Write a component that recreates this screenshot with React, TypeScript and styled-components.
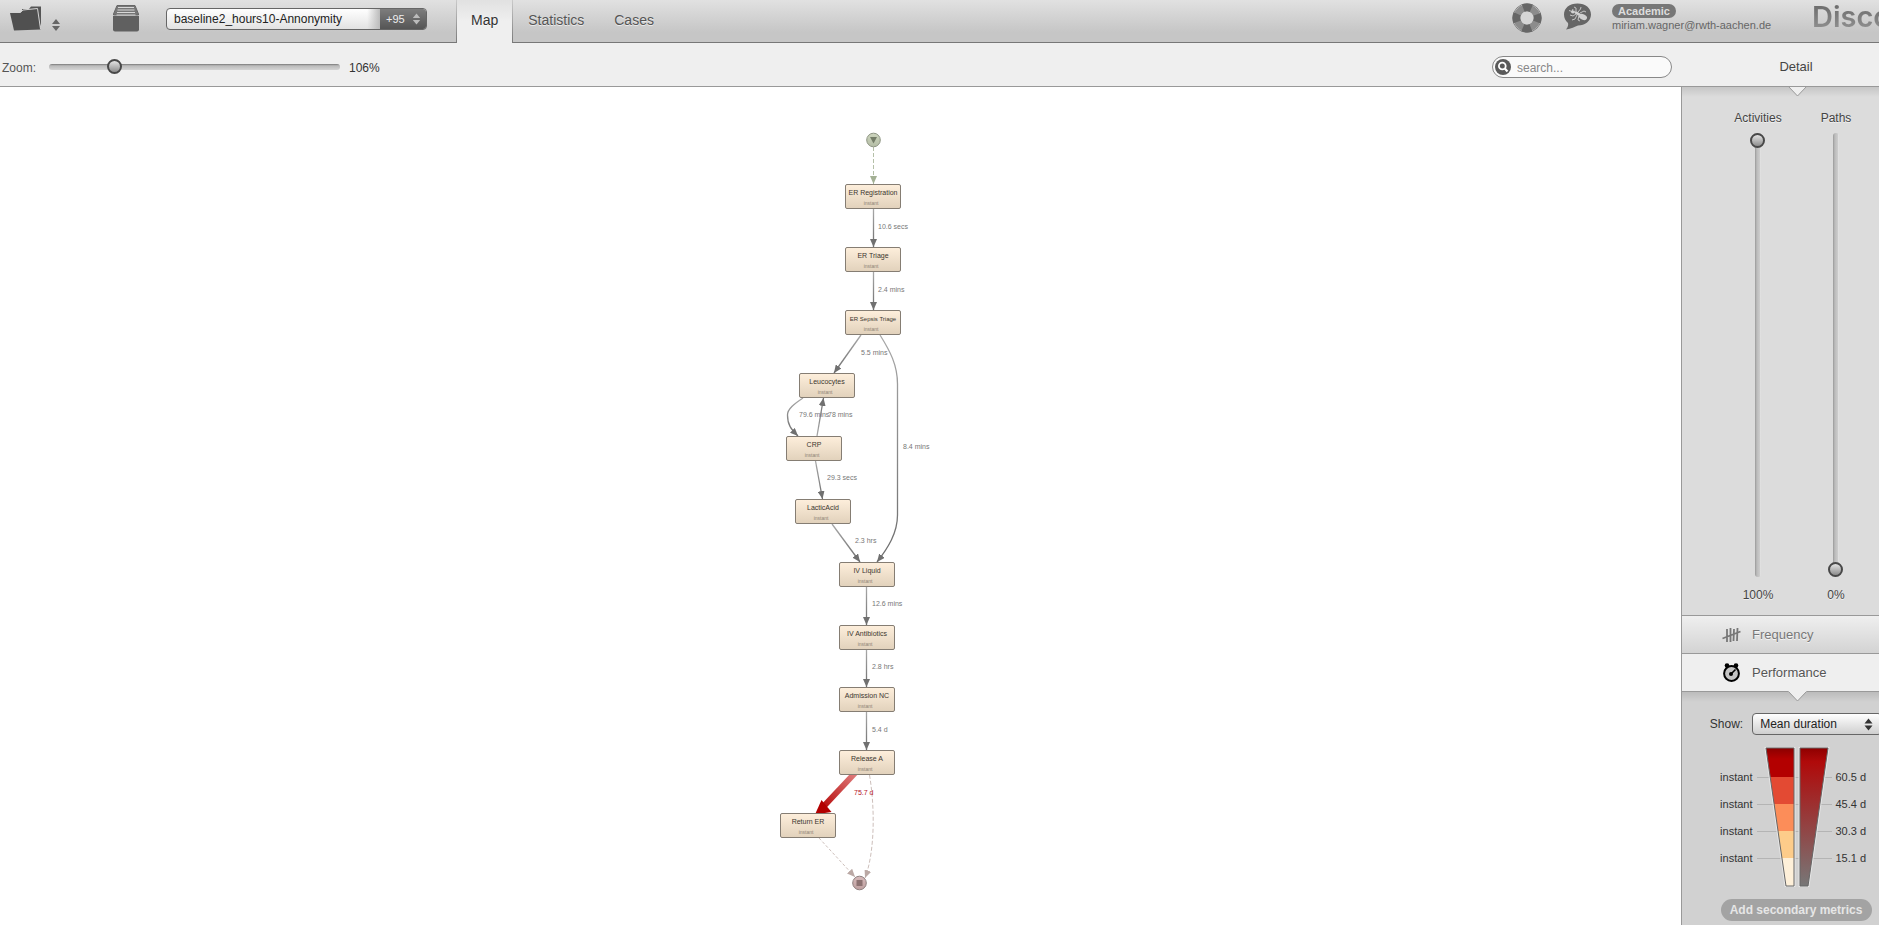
import React, { useState } from "react";
import styled, { createGlobalStyle, css } from "styled-components";

const GlobalStyle = createGlobalStyle`
  *, *::before, *::after { box-sizing: border-box; }
  body {
    margin: 0;
    background: #fff;
    color: #333;
    font: 12px/16px "Liberation Sans", Arial, sans-serif;
  }
  button, input, select { font: inherit; color: inherit; margin: 0; }
`;

const SIDEBAR = "198px";
const PANEL = "230px";

const Page = styled.div`
  display: flex;
  flex-direction: column;
  min-height: 100vh;
`;

/* ---------- header ---------- */

const Header = styled.header`
  display: flex;
  align-items: stretch;
  height: 43px;
  overflow: hidden;
  background: linear-gradient(#e1e1e1, #c6c6c6 75%);
  box-shadow: inset 0 -1px #777;
`;

const IconButton = styled.button`
  display: flex;
  align-items: flex-start;
  padding: 5px 0 0;
  border: 0;
  background: none;
`;

const FileTools = styled.div`
  display: flex;
  align-items: flex-start;
  gap: 52px;
  padding-left: 10px;
`;

const LogPicker = styled.div`
  display: flex;
  width: 261px;
  height: 22px;
  margin: 8px 29px 0 27px;
  border: 1px solid #666;
  border-radius: 4px;
  overflow: hidden;
  background: linear-gradient(#fff, #e2e2e2);
`;

const LogSelect = styled.select`
  flex: 1;
  min-width: 0;
  padding: 0 7px;
  border: 0;
  appearance: none;
  background: linear-gradient(90deg, transparent 94%, #bbb);
  color: #222;
`;

const MoreLogs = styled.button`
  display: flex;
  align-items: center;
  gap: 7px;
  width: 46px;
  padding: 0 0 0 6px;
  border: 0;
  background: linear-gradient(#7d7d7d, #555);
  color: #eee;
  font-size: 11px;
`;

const Tabs = styled.nav`
  display: flex;
`;

const Tab = styled.a<{ $active?: boolean }>`
  padding: 12px 15px 0;
  font-size: 14px;
  color: #555;
  text-decoration: none;
  text-shadow: 0 1px rgba(255, 255, 255, 0.6);
  ${(p) =>
    p.$active &&
    css`
      color: #333;
      padding: 12px 14px 0;
      border: solid;
      border-width: 0 1px;
      border-image: linear-gradient(#ccc, #777) 1;
      background: linear-gradient(#e1e1e1, #efefef 50%);
    `}
`;

const HeaderRight = styled.div`
  display: flex;
  align-items: flex-start;
  margin-left: auto;
`;

const HelpTools = styled.div`
  display: flex;
  gap: 20px;
  margin: -3px 20px 0 0;
`;

const Account = styled.div`
  display: flex;
  flex-direction: column;
  align-items: flex-start;
  width: 200px;
  padding-top: 4px;
  font-size: 11px;
  line-height: 14px;
  color: #666;
`;

const Badge = styled.strong`
  padding: 0 6px;
  border-radius: 7px;
  background: #777;
  color: #ddd;
`;

const Logo = styled.div`
  width: 67px;
  overflow: hidden;
  font: 600 29px/33px Inter, sans-serif;
  background: linear-gradient(#6c6c6c 15%, #969696);
  background-clip: text;
  color: transparent;
  white-space: nowrap;
`;

/* ---------- tool bar ---------- */

const Toolbar = styled.div`
  display: flex;
  align-items: center;
  height: 44px;
  padding: 7px 0 0 2px;
  background: #efefef;
  border-bottom: 1px solid #999;
`;

const ZoomLabel = styled.label`
  width: 47px;
  color: #555;
`;

const thumb = css`
  appearance: none;
  width: 15px;
  height: 15px;
  border: 2px solid #484848;
  border-radius: 50%;
  background: linear-gradient(#e4e4e4, #8c8c8c);
`;

const Slider = styled.input`
  appearance: none;
  width: 291px;
  height: 15px;
  margin: 0 9px 2px 0;
  background: none;
  &::-webkit-slider-runnable-track {
    height: 6px;
    border-radius: 3px;
    background: linear-gradient(#777, #bbb 30%, #d4d4d4);
  }
  &::-webkit-slider-thumb {
    ${thumb}
    margin-top: -5px;
  }
`;

const Search = styled.label`
  display: flex;
  align-items: center;
  gap: 6px;
  width: 180px;
  height: 22px;
  margin: 0 9px 2px auto;
  padding-left: 2px;
  border: 1px solid #888;
  border-radius: 11px;
  background: #fafafa;
  input {
    flex: 1;
    min-width: 0;
    padding: 1px 0 0;
    border: 0;
    outline: 0;
    background: none;
  }
  input::placeholder { color: #888; opacity: 1; }
`;

const DetailCell = styled.div`
  width: ${SIDEBAR};
  overflow: hidden;
  h2 {
    width: ${PANEL};
    margin: 0 0 3px;
    font-size: 13px;
    font-weight: 400;
    text-align: center;
    color: #444;
  }
`;

/* ---------- work area ---------- */

const Work = styled.div`
  display: flex;
  flex: 1;
`;

const Canvas = styled.main`
  flex: 1;
  min-width: 0;
  overflow: hidden;
`;

const Stage = styled.div`
  position: relative;
  width: 201px;
  height: 830px;
  margin: 0 auto;
`;

const Edges = styled.svg`
  position: absolute;
  inset: 0;
  width: 100%;
  height: 100%;
`;

const NodeBox = styled.div<{ $x: number; $y: number; $small?: boolean }>`
  position: absolute;
  left: ${(p) => p.$x}px;
  top: ${(p) => p.$y}px;
  width: 56px;
  height: 25px;
  padding-top: 4px;
  border: 1px solid #857d73;
  border-radius: 2px;
  background: linear-gradient(#fdeedb, #e2d2bc);
  text-align: center;
  white-space: nowrap;
  font-size: ${(p) => (p.$small ? 6 : 7)}px;
  line-height: 8px;
  color: #3c362f;
  small {
    display: block;
    padding: 2px 4px 0 0;
    font-size: 5px;
    color: #8d8375;
  }
`;

const EdgeLabel = styled.span<{ $x: number; $y: number; $hot?: boolean }>`
  position: absolute;
  left: ${(p) => p.$x}px;
  top: ${(p) => p.$y - 4}px;
  font-size: 7px;
  line-height: 8px;
  white-space: nowrap;
  color: ${(p) => (p.$hot ? "#b3121d" : "#777")};
`;

/* ---------- side bar ---------- */

const Sidebar = styled.aside`
  width: ${SIDEBAR};
  overflow: hidden;
  border-left: 1px solid #999;
  background: #d1d1d1;
`;

const Panel = styled.section<{ $bg: string }>`
  position: relative;
  width: ${PANEL};
  background: linear-gradient(rgba(0, 0, 0, 0.1), transparent 10px) ${(p) => p.$bg};
`;

const Notch = styled.svg`
  position: absolute;
  top: -1px;
  left: 106px;
`;

const Sliders = styled.div`
  display: flex;
  justify-content: center;
  padding: 23px 0 12px;
`;

const SliderColumn = styled.label`
  display: flex;
  flex-direction: column;
  align-items: center;
  width: 78px;
  color: #444;
  text-shadow: 0 1px rgba(255, 255, 255, 0.6);
  input {
    appearance: none;
    writing-mode: vertical-lr;
    direction: rtl;
    width: 15px;
    height: 444px;
    margin: 7px 0 10px;
    background: none;
  }
  input::-webkit-slider-runnable-track {
    width: 6px;
    border-radius: 3px;
    background: linear-gradient(90deg, #999, #bbb 30%, #ccc 80%, #eee);
  }
  input::-webkit-slider-thumb {
    ${thumb}
    margin-left: -5px;
  }
`;

const ViewButton = styled.button<{ $active?: boolean }>`
  display: flex;
  align-items: center;
  gap: 11px;
  width: ${PANEL};
  height: 38px;
  padding: 0 0 0 40px;
  border: 0;
  border-top: 1px solid #999;
  background: ${(p) => (p.$active ? "#efefef" : "linear-gradient(#efefef, #d3d3d3)")};
  color: ${(p) => (p.$active ? "#555" : "#777")};
  font-size: 13px;
  text-shadow: 0 1px rgba(255, 255, 255, 0.7);
`;

const Metrics = styled(Panel)`
  display: flex;
  flex-direction: column;
  align-items: center;
  border-top: 1px solid #999;
  padding: 21px 2px 3px 0;
`;

const ShowRow = styled.div`
  display: flex;
  align-items: center;
  gap: 9px;
  margin-bottom: 12px;
`;

const SelectShell = styled.div`
  display: flex;
  align-items: center;
  width: 130px;
  height: 22px;
  padding-right: 8px;
  border: 1px solid #666;
  border-radius: 4px;
  background: linear-gradient(#fff, #cfcfcf);
  select {
    flex: 1;
    min-width: 0;
    padding: 0 0 0 7px;
    border: 0;
    appearance: none;
    background: none;
    color: #222;
  }
`;

const Legend = styled.div`
  display: grid;
  grid-template-columns: 40px 77px 40px;
  column-gap: 3px;
  margin: 0 4px 12px 0;
  font-size: 11px;
  line-height: 27px;
`;

const Scale = styled.ul<{ $right?: boolean }>`
  margin: 0;
  padding: 17px 0 0;
  list-style: none;
  white-space: nowrap;
  text-align: ${(p) => (p.$right ? "right" : "left")};
`;

const AddMetrics = styled.button`
  width: 151px;
  height: 22px;
  padding: 0;
  border: 0;
  border-radius: 11px;
  background: #a3a3a3;
  color: #e6e6e6;
  font-weight: 700;
  white-space: nowrap;
`;

/* ---------- data ---------- */

const nodes: [string, number, number][] = [
  ["ER Registration", 105, 97],
  ["ER Triage", 105, 160],
  ["ER Sepsis Triage", 105, 223],
  ["Leucocytes", 59, 286],
  ["CRP", 46, 349],
  ["LacticAcid", 55, 412],
  ["IV Liquid", 99, 475],
  ["IV Antibiotics", 99, 538],
  ["Admission NC", 99, 600],
  ["Release A", 99, 663],
  ["Return ER", 40, 726],
];

const labels: [string, number, number][] = [
  ["10.6 secs", 138, 140],
  ["2.4 mins", 138, 203],
  ["5.5 mins", 121, 266],
  ["79.6 mins", 59, 328],
  ["78 mins", 88, 328],
  ["8.4 mins", 163, 360],
  ["29.3 secs", 87, 391],
  ["2.3 hrs", 115, 454],
  ["12.6 mins", 132, 517],
  ["2.8 hrs", 132, 580],
  ["5.4 d", 132, 643],
  ["75.7 d", 114, 706],
];

/* path, start y, end y */
const edges: [string, number, number][] = [
  ["M133.5 122V160", 122, 160],
  ["M133.5 185V223", 185, 223],
  ["M121 248L94 286", 248, 286],
  ["M140 248C150 264 157.500 278 157.500 297V428C157.500 446 148 461 137 475", 248, 475],
  ["M63 311C54 317 47.500 322 47.500 328C47.500 338 51 342 58 349", 311, 349],
  ["M77 349L83.500 311", 349, 311],
  ["M75.500 374L82.500 412", 374, 412],
  ["M92 437L120 475", 437, 475],
  ["M126.500 500V538", 500, 538],
  ["M126.500 563V600", 563, 600],
  ["M126.500 625V663", 625, 663],
];

const bands = ["#b30000", "#e34a33", "#fc8d59", "#fdcc8a", "#fef0d9"];

/* ---------- drawings ---------- */

const Arrows = ({ color, h = 13 }: { color: string; h?: number }) => (
  <svg width="9" height={h} viewBox="0 0 9 13" fill={color} aria-hidden>
    <path d="M4.500 0.500L8.500 5.500H0.500zM0.500 7.500H8.500L4.500 12.500z" />
  </svg>
);

const FolderIcon = () => (
  <svg width="32" height="26" viewBox="0 0 32 26" aria-hidden>
    <path d="M12 8V4H19L21 1.500H31V19L29 24H9z" fill="#555" />
    <path d="M0 8H10L13 5.500L27.500 4.500L30.500 24.500L4 25.500z" fill="#505050" />
    <path d="M0 7.500H10L13 5L27.500 3.500L30.500 24" fill="none" stroke="#d5d5d5" />
  </svg>
);

const BoxIcon = () => (
  <svg width="26" height="27" viewBox="0 0 26 27" aria-hidden>
    <path d="M4 0.500H22L25.500 9V10H0.500V9z" fill="#777" stroke="#666" />
    <path d="M5 2.500H21M4.500 5H21.500M4 7.500H22M3.500 10H22.500" stroke="#d8d8d8" strokeWidth="1.200" />
    <path d="M0 11H26V24.500Q26 26.500 24 26.500H2Q0 26.500 0 24.500z" fill="#606060" />
  </svg>
);

const BuoyIcon = () => (
  <svg width="32" height="32" viewBox="0 0 32 32" fill="none" aria-hidden>
    <circle cx="16" cy="16" r="14.300" stroke="#858585" strokeWidth="1" />
    <circle cx="16" cy="16" r="10" stroke="#8c8c8c" strokeWidth="7" />
    <circle
      cx="16"
      cy="16"
      r="10.500"
      stroke="#666"
      strokeWidth="8"
      strokeDasharray="8.247 8.247"
      strokeDashoffset="4.123"
    />
    <circle cx="16" cy="16" r="6.500" fill="#d6d6d6" />
  </svg>
);

const BubbleIcon = () => (
  <svg width="29" height="28" viewBox="0 0 29 28" aria-hidden>
    <path
      d="M14.500 1.500C22.500 1.500 28 6 28 12.500C28 19 22 23.500 15 23.500C12 25 8 26.500 3 27.500C5 25 5.500 23 5 21C2.500 19 1 16 1 12.500C1 6 6.500 1.500 14.500 1.500z"
      fill="#666"
    />
    <g stroke="#cfcfcf" strokeWidth="0.900" fill="none">
      <path d="M6 8.500L9 9.500L10 7M13 12L10 14L7 13M14 13L12 17L9 18M16 13L15 18L17 19M13 10L13 6L11 5M15 10L17.500 7L18 5M17 11L21 9L23 10" />
    </g>
    <g fill="#d2d2d2">
      <ellipse cx="10" cy="10" rx="2" ry="1.400" />
      <ellipse cx="14.500" cy="11.500" rx="3" ry="1.400" transform="rotate(25 14.500 11.500)" />
      <ellipse cx="20" cy="15" rx="4.200" ry="2.700" transform="rotate(25 20 15)" />
    </g>
  </svg>
);

const SearchIcon = () => (
  <svg width="16" height="16" viewBox="0 0 16 16" fill="none" aria-hidden>
    <circle cx="8" cy="8" r="8" fill="#5a5a5a" />
    <circle cx="7.300" cy="7" r="3.400" stroke="#fff" strokeWidth="1.800" />
    <path d="M9.800 9.600L12.500 12.500" stroke="#fff" strokeWidth="2.200" />
  </svg>
);

const TallyIcon = () => (
  <svg width="19" height="16" viewBox="0 0 19 16" stroke="#777" strokeWidth="1.800" aria-hidden>
    <path d="M5 2V15M8.500 1V15M12 2L11.500 14M15.500 1L15 14M0.500 11.500L18.500 4.500" />
  </svg>
);

const ClockIcon = () => (
  <svg width="19" height="19" viewBox="0 0 19 19" aria-hidden>
    <circle cx="5" cy="2.500" r="2.300" />
    <circle cx="14" cy="2.500" r="2.300" />
    <circle cx="9.500" cy="10.500" r="7.400" fill="#c4c4c4" stroke="#000" strokeWidth="2" />
    <circle cx="9" cy="11" r="2" />
    <path d="M9 11L13.500 6.500" stroke="#000" strokeWidth="1.600" />
  </svg>
);

const NotchMark = () => (
  <Notch width="19" height="11" viewBox="0 0 19 11" aria-hidden>
    <path d="M0 0L9.500 10L19 0z" fill="#efefef" />
    <path d="M0.500 0.500L9.500 10L18.500 0.500" fill="none" stroke="#999" />
  </Notch>
);

const Head = ({ id, color }: { id: string; color: string }) => (
  <marker id={id} viewBox="0 0 8 7" refX="8" refY="3.500" markerWidth="8" markerHeight="7" markerUnits="userSpaceOnUse" orient="auto">
    <path d="M0 0L8 3.500L0 7z" fill={color} />
  </marker>
);

const ProcessEdges = () => (
  <Edges aria-hidden fill="none">
    <defs>
      <Head id="head" color="#707070" />
      <Head id="headStart" color="#a3b094" />
      <Head id="headEnd" color="#bba9a5" />
      {edges.map(([, y1, y2], i) => (
        <linearGradient key={i} id={`edge${i}`} gradientUnits="userSpaceOnUse" x1="0" x2="0" y1={y1} y2={y2}>
          <stop stopColor="#a8a8a8" />
          <stop offset="1" stopColor="#6c6c6c" />
        </linearGradient>
      ))}
      <linearGradient id="hot" gradientUnits="userSpaceOnUse" x1="115" x2="80" y1="689" y2="724">
        <stop stopColor="#dd7777" />
        <stop offset="1" stopColor="#b30000" />
      </linearGradient>
      <linearGradient id="startFill" x2="0" y2="1">
        <stop stopColor="#cdd5be" />
        <stop offset="1" stopColor="#b4bda5" />
      </linearGradient>
      <linearGradient id="endFill" x2="0" y2="1">
        <stop stopColor="#d6baba" />
        <stop offset="1" stopColor="#bd9f9f" />
      </linearGradient>
    </defs>
    <path d="M133.500 60V97" stroke="#b5c0a8" strokeDasharray="4 2" markerEnd="url(#headStart)" />
    {edges.map(([d], i) => (
      <path key={i} d={d} stroke={`url(#edge${i})`} strokeWidth="1.300" markerEnd="url(#head)" />
    ))}
    <path d="M115 686L84 719" stroke="url(#hot)" strokeWidth="6" />
    <path d="M75 727.500L81.500 713L91.500 725z" fill="#b30000" />
    <path d="M79 751L115 790" stroke="#cdbfbb" strokeDasharray="3 2" markerEnd="url(#headEnd)" />
    <path d="M129.500 688C135 720 135 765 125 791" stroke="#cdbfbb" strokeDasharray="4 2" markerEnd="url(#headEnd)" />
    <circle cx="133.500" cy="53" r="6.800" fill="url(#startFill)" stroke="#8f9684" />
    <path d="M130 50H137L133.500 56.500z" fill="#747d68" />
    <circle cx="119.500" cy="796" r="6.800" fill="url(#endFill)" stroke="#8f8080" />
    <rect x="116.500" y="793" width="6" height="6" fill="#8c7272" />
  </Edges>
);

const Funnels = () => (
  <svg width="77" height="140" viewBox="0 0 77 140" aria-hidden>
    <defs>
      <clipPath id="leftFunnel">
        <path d="M10 1H38V139H30z" />
      </clipPath>
      <linearGradient id="rightFunnel" x2="0" y2="1">
        <stop stopColor="#8e0000" />
        <stop offset="0.100" stopColor="#b00a0a" />
        <stop offset="1" stopColor="#777" />
      </linearGradient>
      <linearGradient id="topShade" x2="0" y2="1">
        <stop stopColor="#000" stopOpacity="0.250" />
        <stop offset="1" stopColor="#000" stopOpacity="0" />
      </linearGradient>
    </defs>
    <path d="M1 30.500H76M1 57.500H76M1 84.500H76M1 111.500H76" stroke="#b4b4b4" />
    <path d="M10 1H38V139H30z" fill="none" stroke="#e6e6e6" strokeWidth="3" />
    <path d="M44 1H72L52 139H44z" fill="#d1d1d1" stroke="#e6e6e6" strokeWidth="3" />
    <g clipPath="url(#leftFunnel)">
      {bands.map((c, i) => (
        <rect key={c} x="9" y={i === 0 ? 0 : 3 + 27 * i} width="30" height={i === 0 ? 30 : 29} fill={c} />
      ))}
      <rect x="9" y="0" width="30" height="12" fill="url(#topShade)" />
    </g>
    <path d="M10 1H38V139H30z" fill="none" stroke="#666" />
    <path d="M44 1H72L52 139H44z" fill="url(#rightFunnel)" stroke="#666" />
  </svg>
);

/* ---------- page ---------- */

export default function App() {
  const [zoom, setZoom] = useState(106);
  const [activities, setActivities] = useState(100);
  const [paths, setPaths] = useState(0);

  return (
    <Page>
      <GlobalStyle />
      <Header>
        <FileTools>
          <IconButton aria-label="Open">
            <FolderIcon />
            <svg width="19" height="27" viewBox="0 0 19 27" fill="#666" aria-hidden>
              <path d="M14 14L18 19H10zM10 21H18L14 26z" />
            </svg>
          </IconButton>
          <IconButton aria-label="Archive">
            <BoxIcon />
          </IconButton>
        </FileTools>
        <LogPicker>
          <LogSelect aria-label="Event log">
            <option>baseline2_hours10-Annonymity</option>
          </LogSelect>
          <MoreLogs>
            +95 <Arrows color="#bbb" h={12} />
          </MoreLogs>
        </LogPicker>
        <Tabs>
          <Tab href="#map" $active>Map</Tab>
          <Tab href="#statistics">Statistics</Tab>
          <Tab href="#cases">Cases</Tab>
        </Tabs>
        <HeaderRight>
          <HelpTools>
            <IconButton aria-label="Help"><BuoyIcon /></IconButton>
            <IconButton aria-label="Feedback"><BubbleIcon /></IconButton>
          </HelpTools>
          <Account>
            <Badge>Academic</Badge>
            <span>miriam.wagner@rwth-aachen.de</span>
          </Account>
          <Logo>Disco</Logo>
        </HeaderRight>
      </Header>

      <Toolbar>
        <ZoomLabel htmlFor="zoom">Zoom:</ZoomLabel>
        <Slider id="zoom" type="range" min={64} max={264} value={zoom} onChange={(e) => setZoom(+e.target.value)} />
        <output htmlFor="zoom">{zoom}%</output>
        <Search>
          <SearchIcon />
          <input type="search" placeholder="search..." aria-label="Search" />
        </Search>
        <DetailCell>
          <h2>Detail</h2>
        </DetailCell>
      </Toolbar>

      <Work>
        <Canvas>
          <Stage>
            <ProcessEdges />
            {nodes.map(([name, x, y]) => (
              <NodeBox key={name} $x={x} $y={y} $small={name.length > 15}>
                {name}
                <small>instant</small>
              </NodeBox>
            ))}
            {labels.map(([text, x, y]) => (
              <EdgeLabel key={text} $x={x} $y={y} $hot={text === "75.7 d"}>
                {text}
              </EdgeLabel>
            ))}
          </Stage>
        </Canvas>

        <Sidebar>
          <Panel $bg="#dcdcdc">
            <NotchMark />
            <Sliders>
              <SliderColumn>
                Activities
                <input type="range" value={activities} onChange={(e) => setActivities(+e.target.value)} />
                <span>{activities}%</span>
              </SliderColumn>
              <SliderColumn>
                Paths
                <input type="range" value={paths} onChange={(e) => setPaths(+e.target.value)} />
                <span>{paths}%</span>
              </SliderColumn>
            </Sliders>
          </Panel>
          <ViewButton>
            <TallyIcon /> Frequency
          </ViewButton>
          <ViewButton $active>
            <ClockIcon /> Performance
          </ViewButton>
          <Metrics $bg="#d1d1d1">
            <NotchMark />
            <ShowRow>
              <label htmlFor="metric">Show:</label>
              <SelectShell>
                <select id="metric">
                  <option>Mean duration</option>
                </select>
                <Arrows color="#333" />
              </SelectShell>
            </ShowRow>
            <Legend>
              <Scale $right>
                {[0, 1, 2, 3].map((i) => (
                  <li key={i}>instant</li>
                ))}
              </Scale>
              <Funnels />
              <Scale>
                <li>60.5 d</li>
                <li>45.4 d</li>
                <li>30.3 d</li>
                <li>15.1 d</li>
              </Scale>
            </Legend>
            <AddMetrics>Add secondary metrics</AddMetrics>
          </Metrics>
        </Sidebar>
      </Work>
    </Page>
  );
}
